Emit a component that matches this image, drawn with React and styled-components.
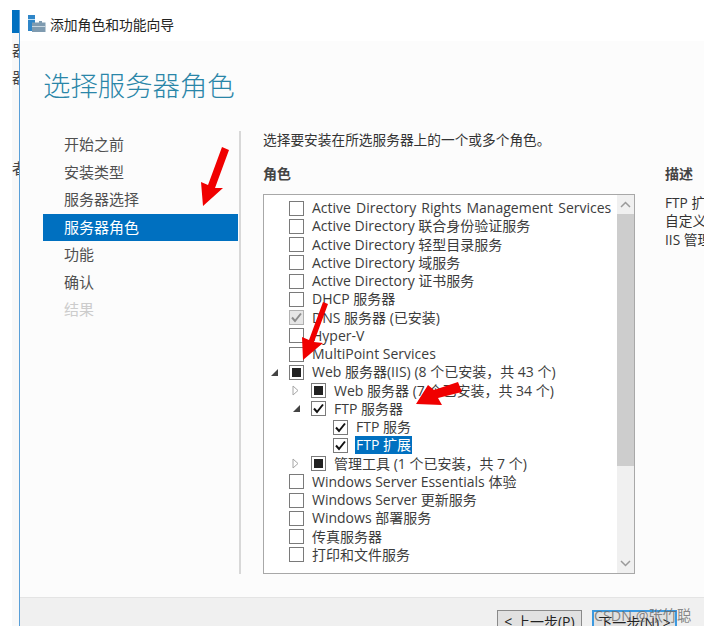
import React from "react";
import styled, { createGlobalStyle } from "styled-components";

const FONT = `"Open Sans", "Noto Sans CJK SC", sans-serif`;

const GlobalStyle = createGlobalStyle`
  html, body {
    margin: 0;
    padding: 0;
    background: #fff;
    overflow: hidden;
  }
  * { box-sizing: border-box; }
`;

const steps = [
  { label: "开始之前" },
  { label: "安装类型" },
  { label: "服务器选择" },
  { label: "服务器角色", active: true },
  { label: "功能" },
  { label: "确认" },
  { label: "结果", disabled: true },
];

const roles = [
  { label: "Active Directory Rights Management Services", wide: true },
  { label: "Active Directory 联合身份验证服务" },
  { label: "Active Directory 轻型目录服务" },
  { label: "Active Directory 域服务" },
  { label: "Active Directory 证书服务" },
  { label: "DHCP 服务器" },
  { label: "DNS 服务器 (已安装)", state: "locked" },
  { label: "Hyper-V" },
  { label: "MultiPoint Services" },
  { label: "Web 服务器(IIS) (8 个已安装，共 43 个)", state: "partial", expander: "open" },
  { label: "Web 服务器 (7 个已安装，共 34 个)", state: "partial", expander: "closed", level: 1 },
  { label: "FTP 服务器", state: "checked", expander: "open", level: 1 },
  { label: "FTP 服务", state: "checked", level: 2 },
  { label: "FTP 扩展", state: "checked", level: 2, selected: true },
  { label: "管理工具 (1 个已安装，共 7 个)", state: "partial", expander: "closed", level: 1 },
  { label: "Windows Server Essentials 体验" },
  { label: "Windows Server 更新服务" },
  { label: "Windows 部署服务" },
  { label: "传真服务器" },
  { label: "打印和文件服务" },
];

const Page = styled.div`
  position: relative;
  display: flex;
  width: 708px;
  height: 632px;
  padding: 10px 4px 6px 12px;
  overflow: hidden;
  font-family: ${FONT};
`;

const BackWindow = styled.div`
  width: 7px;
  flex: none;
  background: #f8f8f8;
  overflow: hidden;
`;

const BackTitle = styled.div`
  height: 23px;
  background: #0070c0;
`;

const BackLabel = styled.div`
  width: 14px;
  font-size: 15px;
  line-height: 18px;
  color: #444;
  margin-top: ${(p) => p.$top}px;
`;

const Wizard = styled.div`
  flex: 1;
  min-width: 0;
  display: flex;
  flex-direction: column;
  border-left: 1px solid #5a9fd8;
  background: #fcfcfc;
  overflow: hidden;
`;

const TitleBar = styled.div`
  height: 31px;
  flex: none;
  display: flex;
  align-items: center;
  gap: 4px;
  padding: 0 0 4px 8px;
  background: #fff;
  font-size: 13.8px;
  color: #222;
`;

const Body = styled.div`
  flex: 1;
  min-height: 0;
  padding: 20px 0 0 23px;
`;

const Heading = styled.h1`
  margin: 0;
  height: 50px;
  font-size: 27.4px;
  line-height: 50px;
  font-weight: 300;
  color: #2a86a8;
  white-space: nowrap;
`;

const Columns = styled.div`
  display: flex;
  margin-top: 20px;
`;

const Nav = styled.nav`
  width: 198px;
  height: 443px;
  flex: none;
  border-right: 2px solid #d8d8d8;
`;

const NavItem = styled.div`
  width: 195px;
  height: 27.5px;
  padding-left: 21px;
  font-size: 15px;
  line-height: 27.5px;
  background: ${(p) => (p.$active ? "#0070c0" : "transparent")};
  color: ${(p) => (p.$active ? "#fff" : p.$disabled ? "#ccc" : "#505050")};
`;

const Main = styled.div`
  width: 401px;
  flex: none;
  padding-left: 22px;
`;

const Intro = styled.p`
  margin: 0;
  font-size: 13.7px;
  line-height: 18px;
  color: #333;
  white-space: nowrap;
`;

const SectionTitle = styled.h2`
  margin: ${(p) => p.$top}px 0 0;
  height: 29px;
  font-size: 14px;
  line-height: 18px;
  font-weight: 700;
  color: #444;
`;

const ListBox = styled.div`
  width: 372px;
  height: 380px;
  display: flex;
  border: 1px solid #a8a8a8;
  background: #fff;
`;

const RoleList = styled.div`
  flex: 1;
  min-width: 0;
  padding-top: 4px;
`;

const RoleRow = styled.div`
  height: 18.25px;
  display: flex;
  align-items: center;
  padding-left: ${(p) => p.$level * 22 + 6}px;
  white-space: nowrap;
`;

const ExpanderSlot = styled.span`
  width: 19px;
  flex: none;
  display: flex;
  align-items: center;
`;

const CheckBox = styled.span`
  width: 15px;
  height: 15px;
  flex: none;
  display: flex;
  align-items: center;
  justify-content: center;
  border: 1px solid ${(p) => (p.$state === "locked" ? "#b0b0b0" : "#7a7a7a")};
  background: ${(p) => (p.$state === "locked" ? "#e6e6e6" : "#fff")};
`;

const PartialMark = styled.span`
  width: 9px;
  height: 9px;
  background: #222;
`;

const RoleLabel = styled.span`
  margin-left: 7px;
  padding: 0 1px;
  height: 18px;
  font-size: 14px;
  word-spacing: ${(p) => (p.$wide ? "1.5px" : "0")};
  line-height: 18px;
  color: ${(p) => (p.$selected ? "#fff" : "#3c3c3c")};
  background: ${(p) => (p.$selected ? "#0070c0" : "transparent")};
`;

const ScrollBar = styled.div`
  width: 17px;
  flex: none;
  display: flex;
  flex-direction: column;
  background: #f0f0f0;
`;

const ScrollButton = styled.div`
  height: 19px;
  flex: none;
  display: flex;
  align-items: center;
  justify-content: center;
`;

const ScrollTrack = styled.div`
  flex: 1;
`;

const ScrollThumb = styled.div`
  height: 252px;
  background: #cdcdcd;
`;

const Description = styled.div`
  width: 120px;
  flex: none;
  padding-left: 23px;
`;

const DescText = styled.p`
  margin: 0;
  font-size: 13.7px;
  line-height: 18.25px;
  color: #333;
  white-space: nowrap;
`;

const Footer = styled.div`
  height: 29px;
  flex: none;
  display: flex;
  gap: 10px;
  padding: 12px 0 0 477px;
  background: #f0f0f0;
  border-top: 1px solid #e4e4e4;
`;

const WizardButton = styled.div`
  width: 85px;
  height: 26px;
  flex: none;
  text-align: center;
  font-size: 14px;
  line-height: 22px;
  color: #222;
  background: #e1e1e1;
  border: ${(p) => (p.$primary ? "2px solid #3b99e0" : "1px solid #8a8a8a")};
`;

const Watermark = styled.div`
  position: absolute;
  left: 594px;
  top: 607px;
  font-size: 14.3px;
  line-height: 18px;
  color: rgba(105, 105, 105, 0.8);
  white-space: nowrap;
`;

const ArrowLayer = styled.svg`
  position: absolute;
  left: 0;
  top: 0;
  pointer-events: none;
`;

const AppIcon = () => (
  <svg width="18" height="18" viewBox="0 0 18 18">
    <rect x="0" y="0" width="7" height="16" fill="#2f86c8" />
    <rect x="0" y="4" width="7" height="1" fill="#bfe0f5" />
    <path d="M8 7.500h3V6h3v1.500h3.500V17H4V7.500z" fill="#7f9bb0" />
    <rect x="4" y="11" width="13.500" height="1" fill="#c8d6e0" />
  </svg>
);

const CheckMark = ({ color }) => (
  <svg width="13" height="13" viewBox="0 0 13 13">
    <path d="M2 6.500L5 10L11 2.500" fill="none" stroke={color} strokeWidth="2" />
  </svg>
);

const Expander = ({ type }) =>
  type === "open" ? (
    <svg width="9" height="9" viewBox="0 0 9 9">
      <path d="M8 1V8H1z" fill="#444" />
    </svg>
  ) : (
    <svg width="7" height="11" viewBox="0 0 7 11">
      <path d="M1 1L6 5.500L1 10z" fill="#fff" stroke="#a6a6a6" />
    </svg>
  );

const Chevron = ({ up }) => (
  <svg width="11" height="7" viewBox="0 0 11 7">
    <path
      d={up ? "M1 6L5.500 1.500L10 6" : "M1 1L5.500 5.500L10 1"}
      fill="none"
      stroke="#9a9a9a"
      strokeWidth="1.500"
    />
  </svg>
);

const App = () => {
  return (
    <Page>
      <GlobalStyle />
      <BackWindow>
        <BackTitle />
        <BackLabel $top={8}>器</BackLabel>
        <BackLabel $top={9}>器</BackLabel>
        <BackLabel $top={73}>者</BackLabel>
      </BackWindow>

      <Wizard>
        <TitleBar>
          <AppIcon />
          添加角色和功能向导
        </TitleBar>

        <Body>
          <Heading>选择服务器角色</Heading>
          <Columns>
            <Nav>
              {steps.map((step) => (
                <NavItem key={step.label} $active={step.active} $disabled={step.disabled}>
                  {step.label}
                </NavItem>
              ))}
            </Nav>

            <Main>
              <Intro>选择要安装在所选服务器上的一个或多个角色。</Intro>
              <SectionTitle $top={16}>角色</SectionTitle>
              <ListBox>
                <RoleList>
                  {roles.map((role) => (
                    <RoleRow key={role.label} $level={role.level || 0}>
                      <ExpanderSlot>
                        {role.expander && <Expander type={role.expander} />}
                      </ExpanderSlot>
                      <CheckBox $state={role.state}>
                        {role.state === "checked" && <CheckMark color="#111" />}
                        {role.state === "locked" && <CheckMark color="#8c8c8c" />}
                        {role.state === "partial" && <PartialMark />}
                      </CheckBox>
                      <RoleLabel $selected={role.selected} $wide={role.wide}>
                        {role.label}
                      </RoleLabel>
                    </RoleRow>
                  ))}
                </RoleList>
                <ScrollBar>
                  <ScrollButton>
                    <Chevron up />
                  </ScrollButton>
                  <ScrollThumb />
                  <ScrollTrack />
                  <ScrollButton>
                    <Chevron />
                  </ScrollButton>
                </ScrollBar>
              </ListBox>
            </Main>

            <Description>
              <SectionTitle $top={34}>描述</SectionTitle>
              <DescText>FTP 扩展性</DescText>
              <DescText>自定义提供</DescText>
              <DescText>IIS 管理</DescText>
            </Description>
          </Columns>
        </Body>

        <Footer>
          <WizardButton>&lt; 上一步(P)</WizardButton>
          <WizardButton $primary>下一步(N) &gt;</WizardButton>
        </Footer>
      </Wizard>

      <Watermark>CSDN @张竹聪</Watermark>

      <ArrowLayer width="708" height="632" viewBox="0 0 708 632">
        <path d="M222 147L229 150L215 188L223 188L203 206L201 182L208 185z" fill="#f00000" />
        <path d="M323 302L328 304L314 342L323 343L303 360L302 337L309 340z" fill="#f00000" />
        <path d="M458 382L462 392L438 398L442 405L416 404L428 385L434 390z" fill="#f00000" />
      </ArrowLayer>
    </Page>
  );
};

export default App;
